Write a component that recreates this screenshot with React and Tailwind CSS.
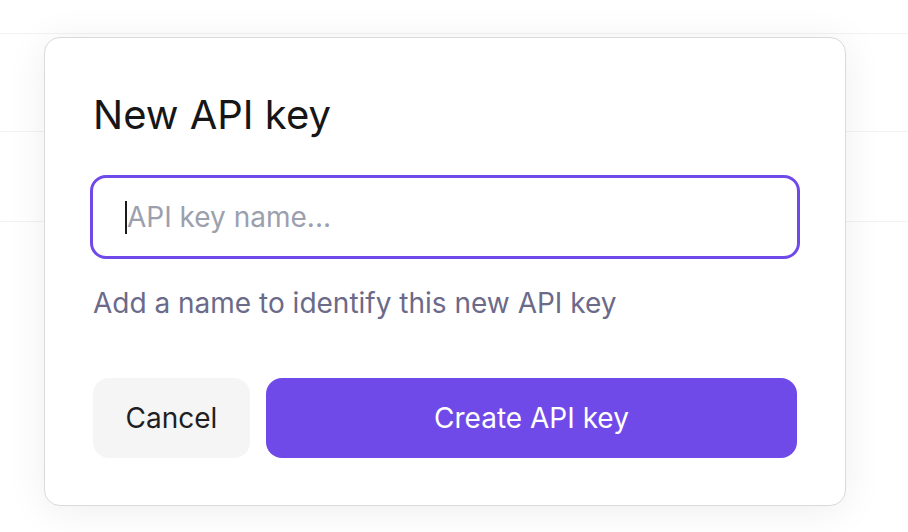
import React from "react";

export default function App() {
  const font = { fontFamily: "Inter, 'Noto Sans', sans-serif" };
  return (
    <div className="relative w-[908px] h-[532px] bg-white overflow-hidden" style={font}>
      {/* background rows */}
      <div className="flex flex-col">
        <div className="h-[34px] border-b border-[#f2f2f2]" />
        <div className="h-[98px] border-b border-[#f2f2f2]" />
        <div className="h-[90px] border-b border-[#f2f2f2]" />
      </div>
      {/* dialog */}
      <div className="absolute left-[44px] top-[37px] w-[802px] h-[469px] bg-white border border-[#dadada] rounded-[16px] shadow-[0_4px_40px_rgba(0,0,0,0.07)] px-[45px] pt-[53px] flex flex-col">
        <h2 className="text-[40px] leading-[48px] font-normal text-[#161616] pl-[3px]">New API key</h2>
        <div className="mt-[36px] h-[84px] border-[3px] border-[#704ae9] rounded-[16px] flex items-center px-[32px]">
          <span className="w-[2px] h-[33px] bg-[#1a1a1a]" />
          <span className="text-[28px] text-[#9ca0ad]">API key name...</span>
        </div>
        <p className="mt-[27px] pl-[3px] text-[28px] leading-[34px] text-[#6b6a89]">Add a name to identify this new API key</p>
        <div className="mt-[58px] flex gap-[16px] px-[3px]">
          <button className="w-[157px] h-[80px] rounded-[16px] bg-[#f5f5f5] text-[28px] text-[#1f1f23] font-normal">Cancel</button>
          <button className="flex-1 h-[80px] rounded-[16px] bg-[#704ae9] text-[28px] text-white font-normal">Create API key</button>
        </div>
      </div>
    </div>
  );
}
